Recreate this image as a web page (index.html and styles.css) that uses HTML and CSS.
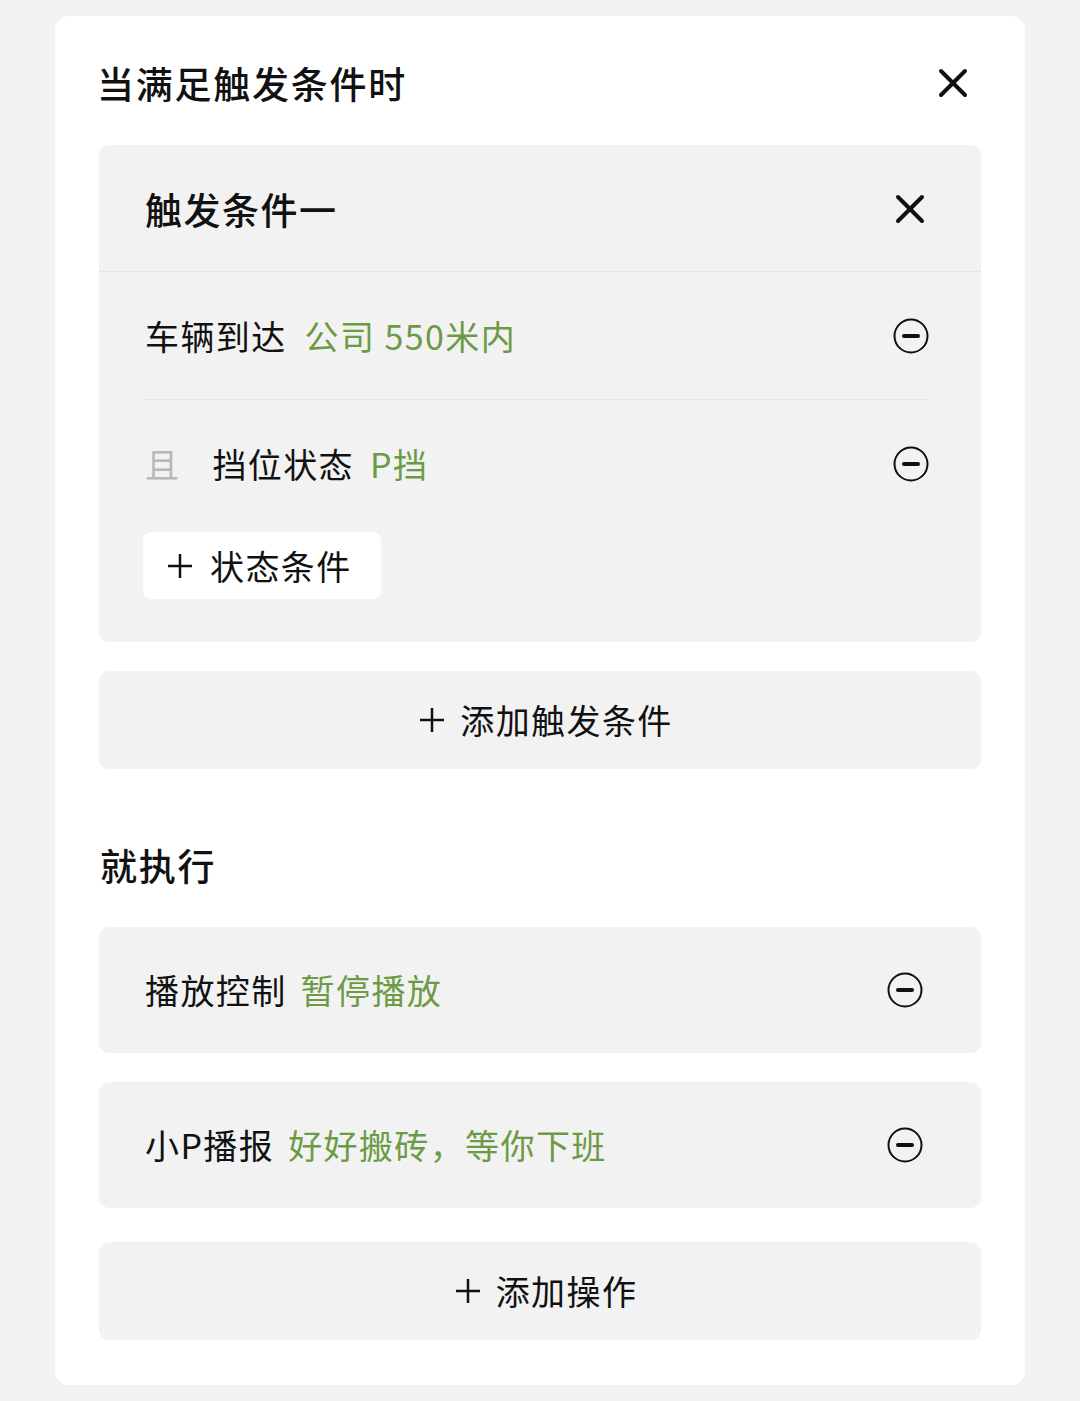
FILE: index.html
```html
<!DOCTYPE html>
<html lang="zh-CN">
<head>
<meta charset="utf-8">
<title>触发条件</title>
<link rel="stylesheet" href="styles.css">
</head>
<body>
<div class="card">
  <div class="title-row">
    <h1 class="title">当满足触发条件时</h1>
    <svg class="icon-x" viewBox="0 0 30 30"><path d="M3 3 L27 27 M27 3 L3 27"/></svg>
  </div>

  <div class="box trigger">
    <div class="trigger-head">
      <span class="head-text">触发条件一</span>
      <svg class="icon-x" viewBox="0 0 30 30"><path d="M3 3 L27 27 M27 3 L3 27"/></svg>
    </div>
    <div class="cond-row first">
      <div class="cond-text"><span class="label">车辆到达</span><span class="value">公司 550米内</span></div>
      <svg class="icon-minus" viewBox="0 0 36 36"><circle cx="18" cy="18" r="16.5"/><path d="M11 18 H25"/></svg>
    </div>
    <div class="cond-row second-row">
      <div class="cond-text"><span class="and">且</span><span class="label">挡位状态</span><span class="value">P挡</span></div>
      <svg class="icon-minus" viewBox="0 0 36 36"><circle cx="18" cy="18" r="16.5"/><path d="M11 18 H25"/></svg>
    </div>
    <div class="state-btn">
      <svg class="icon-plus" viewBox="0 0 26 26"><path d="M13 1 V25 M1 13 H25"/></svg>
      <span>状态条件</span>
    </div>
  </div>

  <div class="box add-btn add-trigger">
    <svg class="icon-plus" viewBox="0 0 26 26"><path d="M13 1 V25 M1 13 H25"/></svg>
    <span>添加触发条件</span>
  </div>

  <h2 class="section-title">就执行</h2>

  <div class="box action">
    <div class="cond-text"><span class="label">播放控制</span><span class="value">暂停播放</span></div>
    <svg class="icon-minus" viewBox="0 0 36 36"><circle cx="18" cy="18" r="16.5"/><path d="M11 18 H25"/></svg>
  </div>

  <div class="box action second">
    <div class="cond-text"><span class="label">小P播报</span><span class="value">好好搬砖，等你下班</span></div>
    <svg class="icon-minus" viewBox="0 0 36 36"><circle cx="18" cy="18" r="16.5"/><path d="M11 18 H25"/></svg>
  </div>

  <div class="box add-btn add-action">
    <svg class="icon-plus" viewBox="0 0 26 26"><path d="M13 1 V25 M1 13 H25"/></svg>
    <span>添加操作</span>
  </div>
</div>
</body>
</html>
```

FILE: styles.css
```css
* { box-sizing: border-box; }

html, body {
  margin: 0;
  padding: 0;
  background: #f2f2f2;
}

body {
  font-family: "Noto Sans CJK SC", "Noto Sans", sans-serif;
  color: #111;
  padding: 16px 55px 15px;
}

.card {
  background: #fff;
  border-radius: 14px;
  padding: 39px 44px 45px;
  display: flex;
  flex-direction: column;
}

.title-row {
  display: flex;
  align-items: center;
  justify-content: space-between;
  height: 56px;
  margin-bottom: 34px;
  padding-right: 13px;
}

.title, .section-title {
  margin: 0;
  font-size: 37px;
  font-weight: 500;
  line-height: 1;
  letter-spacing: 1.75px;
}

.title { margin-left: -2px; }

.icon-x {
  width: 30px;
  height: 30px;
  fill: none;
  stroke: #111;
  stroke-width: 4;
  stroke-linecap: round;
}

.box {
  background: #f2f2f2;
  border-radius: 10px;
}

.trigger {
  padding-bottom: 43px;
}

.trigger-head {
  height: 127px;
  display: flex;
  align-items: center;
  justify-content: space-between;
  padding: 2px 56px 0 46px;
  border-bottom: 1px solid #e6e6e6;
}

.head-text {
  font-size: 37px;
  font-weight: 500;
  line-height: 1;
  letter-spacing: 1.5px;
}

.cond-row {
  display: flex;
  align-items: center;
  justify-content: space-between;
  margin: 0 52px 0 46px;
  height: 124px;
}

.cond-row.first {
  height: 128px;
  border-bottom: 1px solid #e4e4e4;
}

.cond-row.second-row {
  padding-top: 4px;
}

.cond-text {
  display: flex;
  align-items: center;
  font-size: 34px;
  line-height: 1;
  letter-spacing: 1.4px;
}

.label { color: #111; }

.value {
  color: #6c9a45;
  margin-left: 18px;
}

.second-row .value { margin-left: 16px; }

.action .value { margin-left: 14px; }

.and {
  color: #b8b8b8;
  margin-right: 32px;
}

.icon-minus {
  width: 36px;
  height: 36px;
  fill: none;
  stroke: #111;
}

.icon-minus circle { stroke-width: 2; }

.icon-minus path {
  stroke-width: 4;
  stroke-linecap: round;
}

.state-btn {
  align-self: flex-start;
  margin: 8px 0 0 44px;
  height: 67px;
  width: 238px;
  background: #fff;
  border-radius: 8px;
  display: flex;
  align-items: center;
  padding-left: 24px;
  font-size: 34px;
  line-height: 1;
  letter-spacing: 1.4px;
  gap: 17px;
}

.icon-plus {
  width: 26px;
  height: 26px;
  fill: none;
  stroke: #111;
  stroke-width: 2.5;
}

.add-btn {
  height: 98px;
  display: flex;
  align-items: center;
  justify-content: center;
  gap: 15px;
  font-size: 34px;
  line-height: 1;
  letter-spacing: 1.4px;
  padding-left: 12px;
}

.add-trigger { margin-top: 29px; }

.section-title {
  height: 56px;
  display: flex;
  align-items: center;
  margin: 68px 0 34px 1px;
}

.action {
  height: 126px;
  display: flex;
  align-items: center;
  justify-content: space-between;
  padding: 0 58px 0 46px;
}

.action.second { margin-top: 29px; }

.add-action { margin-top: 34px; }
```
